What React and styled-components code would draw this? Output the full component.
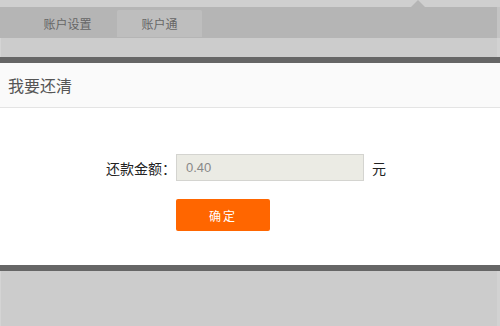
import React from "react";
import styled, { createGlobalStyle } from "styled-components";

const Global = createGlobalStyle`
  html, body { margin: 0; padding: 0; background: #fff; }
  body { font-family: "Noto Sans CJK SC", "Liberation Sans", sans-serif; }
  * { box-sizing: border-box; }
`;

const Page = styled.div`
  width: 500px;
  height: 326px;
  display: flex;
  flex-direction: column;
  overflow: hidden;
`;

const TopStrip = styled.div`
  position: relative;
  height: 7px;
  background: #cfcfcf;
  flex: none;
`;

const Notch = styled.div`
  position: absolute;
  left: ${(p) => p.$left}px;
  bottom: 0;
  width: 0;
  height: 0;
  border-left: 7px solid transparent;
  border-right: 7px solid transparent;
  border-bottom: 7px solid #b5b5b5;
`;

const TabBar = styled.div`
  height: 31px;
  background: #b5b5b5;
  display: flex;
  align-items: flex-end;
  gap: 7px;
  padding-left: 25px;
  flex: none;
  border-right: 3px solid #c4c4c4;
`;

const Tab = styled.div`
  width: 85px;
  height: 27px;
  margin-bottom: 1px;
  display: flex;
  align-items: center;
  justify-content: center;
  font-size: 12px;
  color: #666;
  border-radius: 2px 2px 0 0;
  background: ${(p) => (p.$active ? "#bebebe" : "transparent")};
`;

const GrayBand = styled.div`
  height: ${(p) => p.$h}px;
  background: #cccccc;
  flex: none;
  border-left: 1px solid #d4d4d4;
  border-right: 3px solid #d2d2d2;
`;

const DarkBar = styled.div`
  height: 6px;
  background: #666666;
  flex: none;
`;

const Header = styled.div`
  height: 45px;
  background: #fafafa;
  border-bottom: 1px solid #e4e4e4;
  display: flex;
  align-items: center;
  padding-left: 8px;
  font-size: 16px;
  color: #555;
  flex: none;
`;

const Body = styled.div`
  flex: none;
  height: 157px;
  background: #fff;
  padding-top: 46px;
  display: grid;
  grid-template-columns: 76px 188px auto;
  grid-template-rows: 27px 32px;
  row-gap: 18px;
  column-gap: 0;
  padding-left: 100px;
  align-content: start;
`;

const Label = styled.div`
  font-size: 14px;
  color: #222;
  text-align: right;
  align-self: center;
  white-space: nowrap;
`;

const Input = styled.div`
  height: 27px;
  background: #ebebe4;
  border: 1px solid #d4d4d0;
  display: flex;
  align-items: center;
  padding-left: 9px;
  font-family: "Liberation Sans", sans-serif;
  font-size: 13px;
  color: #888;
`;

const Unit = styled.div`
  font-size: 14px;
  color: #222;
  align-self: center;
  padding-left: 8px;
`;

const Button = styled.div`
  grid-column: 2;
  width: 94px;
  height: 32px;
  background: #ff6600;
  border-radius: 2px;
  color: #fff;
  font-size: 12px;
  letter-spacing: 2px;
  display: flex;
  align-items: center;
  justify-content: center;
`;

export default function App() {
  return (
    <>
      <Global />
      <Page>
        <TopStrip>
          <Notch $left={411} />
        </TopStrip>
        <TabBar>
          <Tab>账户设置</Tab>
          <Tab $active>账户通</Tab>
        </TabBar>
        <GrayBand $h={19} />
        <DarkBar />
        <Header>我要还清</Header>
        <Body>
          <Label>还款金额：</Label>
          <Input>0.40</Input>
          <Unit>元</Unit>
          <Button>确定</Button>
        </Body>
        <DarkBar />
        <GrayBand $h={55} />
      </Page>
    </>
  );
}
